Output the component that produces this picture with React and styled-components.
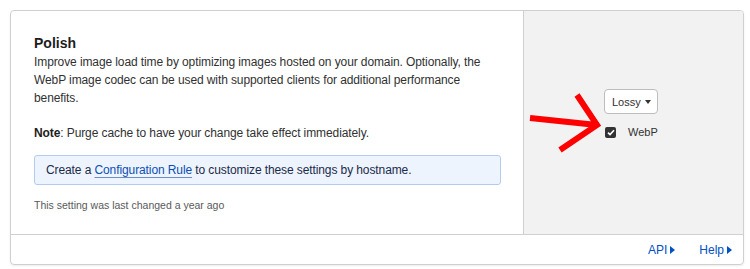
import styled, { createGlobalStyle } from 'styled-components';

const GlobalStyle = createGlobalStyle`
  body {
    margin: 0;
    background: #ffffff;
    font-family: "Liberation Sans", Arial, sans-serif;
    color: #313131;
  }
`;

const Page = styled.main`
  padding: 10px 6px 4px 10px;
`;

const Card = styled.section`
  border: 1px solid #d0d0d0;
  border-radius: 4px;
  overflow: hidden;
  display: flex;
  flex-direction: column;
  width: 732px;
  height: 253px;
  box-shadow: 0 1px 2px rgba(0, 0, 0, 0.08);
`;

const Body = styled.div`
  display: flex;
  flex: 1;
`;

const Info = styled.div`
  width: 489px;
  padding: 24px 0 0 23px;
  border-right: 1px solid #d0d0d0;
`;

const Title = styled.h2`
  margin: 0 0 1px;
  font-size: 14px;
  line-height: 17px;
  font-weight: 700;
  color: #1d1d1d;
`;

const Text = styled.p`
  margin: 0 0 17px;
  width: 450px;
  font-size: 12px;
  line-height: 18px;
  letter-spacing: -0.1px;
  color: #313131;
  b {
    font-weight: 700;
    color: #1d1d1d;
  }
`;

const Notice = styled.div`
  display: flex;
  align-items: center;
  margin-top: -4px;
  padding-left: 11px;
  box-sizing: border-box;
  width: 467px;
  height: 30px;
  background: #eef4fd;
  border: 1px solid #b3cbef;
  border-radius: 3px;
  font-size: 12px;
  letter-spacing: -0.1px;
  color: #1b2a4a;
  a {
    color: #0b4fb4;
    text-decoration: underline;
    text-decoration-color: #6f8fc4;
    text-underline-offset: 3px;
  }
`;

const Changed = styled.p`
  margin: 13px 0 0;
  font-size: 10.5px;
  line-height: 14px;
  color: #595959;
`;

const Controls = styled.div`
  flex: 1;
  background: #f2f2f2;
  display: flex;
  align-items: flex-start;
  padding: 78px 0 0 80px;
  position: relative;
`;

const Stack = styled.div`
  display: flex;
  flex-direction: column;
  align-items: flex-start;
  gap: 12px;
`;

const Select = styled.button`
  display: flex;
  align-items: center;
  gap: 4px;
  height: 25px;
  padding: 0 6px 0 7px;
  background: #ffffff;
  border: 1px solid #bdbdbd;
  border-radius: 4px;
  font-family: inherit;
  font-size: 11px;
  color: #313131;
  svg {
    width: 6px;
    height: 4px;
  }
`;

const Check = styled.label`
  display: flex;
  align-items: center;
  gap: 12px;
  margin-left: 1px;
  font-size: 11px;
  color: #313131;
  span.box {
    width: 11px;
    height: 11px;
    border-radius: 2px;
    background: #333333;
    display: flex;
    align-items: center;
    justify-content: center;
  }
`;

const Arrow = styled.svg`
  position: absolute;
  left: 0;
  top: 0;
`;

const Footer = styled.footer`
  height: 29px;
  border-top: 1px solid #d0d0d0;
  display: flex;
  justify-content: flex-end;
  align-items: center;
  gap: 24px;
  padding-right: 11px;
`;

const FooterLink = styled.a`
  display: flex;
  align-items: center;
  gap: 3px;
  font-size: 12px;
  color: #0051c3;
  text-decoration: none;
`;

const Caret = () => (
  <svg width="5" height="8" viewBox="0 0 5 8">
    <path d="M0 0L5 4L0 8Z" fill="currentColor" />
  </svg>
);

export default function App() {
  return (
    <Page>
      <GlobalStyle />
      <Card>
        <Body>
          <Info>
            <Title>Polish</Title>
            <Text>
              Improve image load time by optimizing images hosted on your domain. Optionally, the WebP image codec can
              be used with supported clients for additional performance benefits.
            </Text>
            <Text>
              <b>Note</b>: Purge cache to have your change take effect immediately.
            </Text>
            <Notice>
              Create a&nbsp;<a href="#">Configuration Rule</a>&nbsp;to customize these settings by hostname.
            </Notice>
            <Changed>This setting was last changed a year ago</Changed>
          </Info>
          <Controls>
            <Stack>
              <Select>
                Lossy
                <svg viewBox="0 0 6 4">
                  <path d="M0 0H6L3 4Z" fill="#333" />
                </svg>
              </Select>
              <Check>
                <span className="box">
                  <svg width="8" height="7" viewBox="0 0 8 7">
                    <path d="M1 3.6L3 5.6L7 1.2" stroke="#fff" strokeWidth="1.6" fill="none" />
                  </svg>
                </span>
                WebP
              </Check>
            </Stack>
            <Arrow width="100" height="160" viewBox="0 0 100 160">
              <path d="M6 107L73 114M53 84L73 114L36 139" stroke="#ff0000" strokeWidth="6" fill="none" />
            </Arrow>
          </Controls>
        </Body>
        <Footer>
          <FooterLink href="#">
            API <Caret />
          </FooterLink>
          <FooterLink href="#">
            Help <Caret />
          </FooterLink>
        </Footer>
      </Card>
    </Page>
  );
}
